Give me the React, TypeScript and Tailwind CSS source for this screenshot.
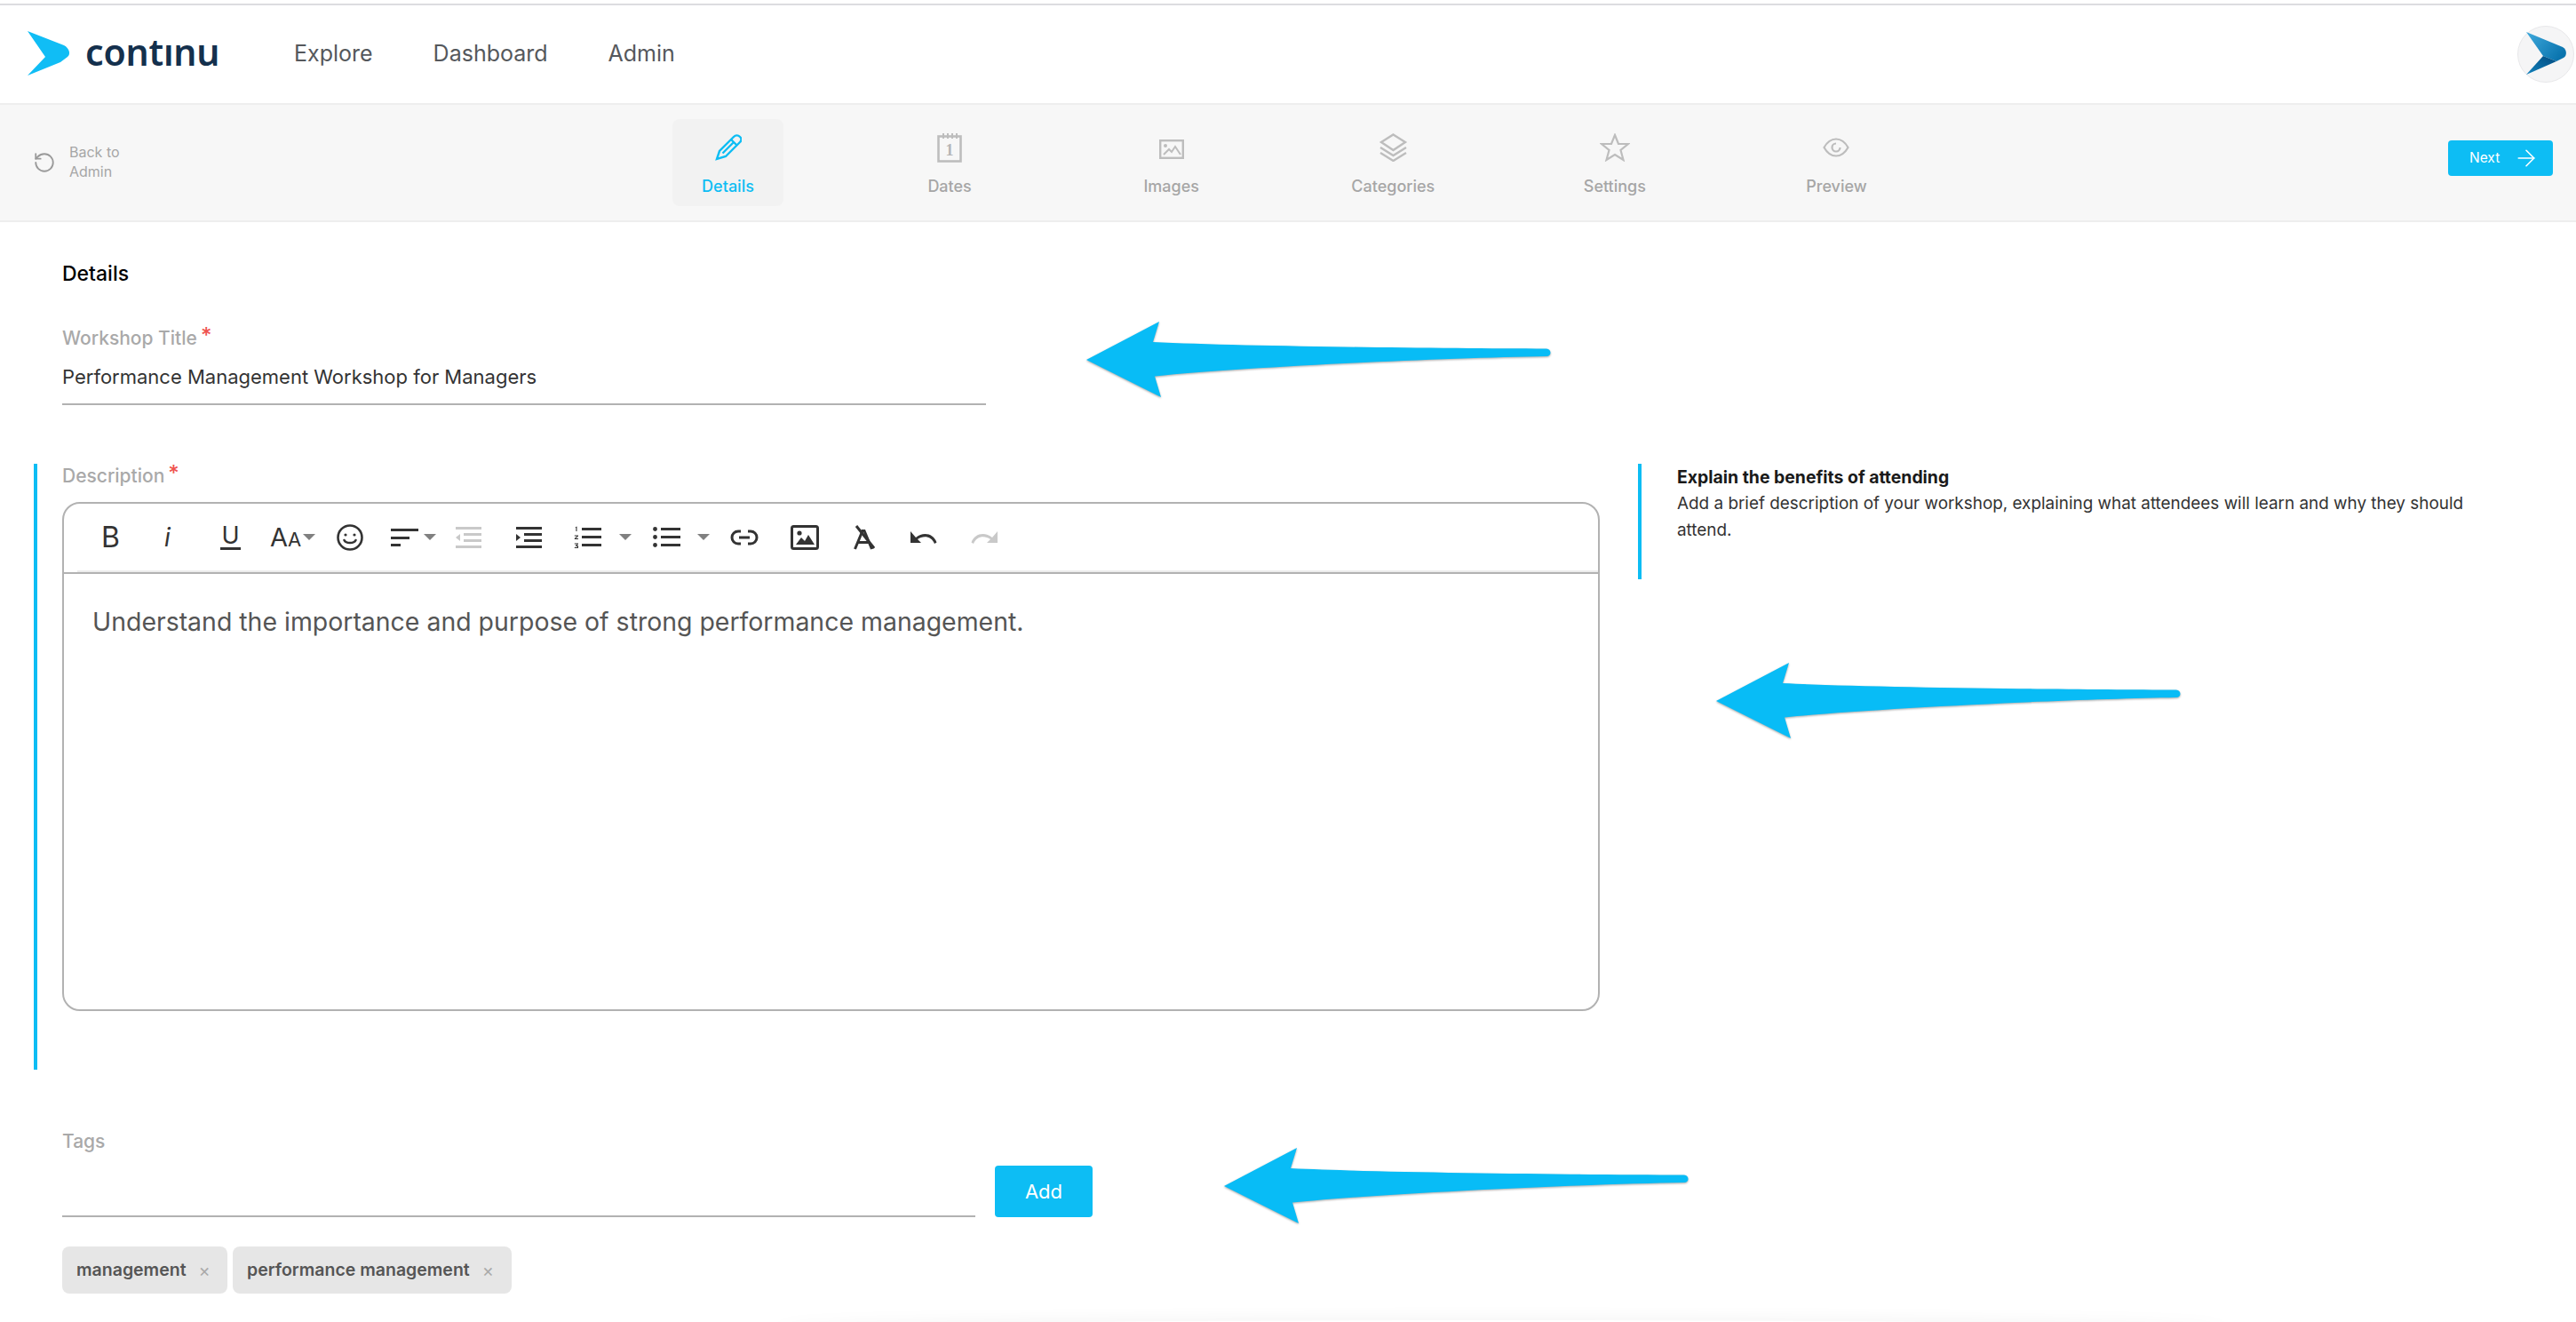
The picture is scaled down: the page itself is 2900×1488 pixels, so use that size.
import { ArrowRight, RotateCcw } from "lucide-react";

const BLUE = "#0dbdf4";
const GREY = "#bdbdbd";

function Logo() {
  return (
    <svg width="50" height="52" viewBox="0 0 50 52" className="shrink-0">
      <path d="M0 0L41 16C47 19 49 26 45 29L37 35L0 50L20 29Z" fill="#10bdf5" />
    </svg>
  );
}

function Avatar() {
  return (
    <div className="w-[64px] h-[64px] rounded-full bg-[#f5f5f6] border border-[#e8e8ea] shrink-0 mr-[2px] flex items-center justify-center">
      <svg width="48" height="50" viewBox="0 0 48 50" className="ml-[4px]">
        <defs>
          <linearGradient id="av1" x1="0" y1="0" x2="1" y2="0.6">
            <stop offset="0" stopColor="#3fa9dc" />
            <stop offset="1" stopColor="#0a74ae" />
          </linearGradient>
          <linearGradient id="av2" x1="0" y1="1" x2="1" y2="0">
            <stop offset="0" stopColor="#1383bd" />
            <stop offset="1" stopColor="#004a80" />
          </linearGradient>
        </defs>
        <path d="M0 0L41 17C46 20 46 27 42 29L34 33L19 27Z" fill="url(#av1)" />
        <path d="M19 27L34 33L0 48Z" fill="url(#av2)" />
      </svg>
    </div>
  );
}

const TABS = [
  {
    label: "Details",
    active: true,
    icon: (
      <svg width="30" height="30" viewBox="0 0 30 30" fill="none" stroke={BLUE} strokeWidth="2.4">
        <path d="M2 28L5 19L21 3C23 1 26 1 28 3C30 5 30 7 28 9L12 25Z" />
        <path d="M18 6L25 13M8.5 21.5L21 9" />
      </svg>
    ),
  },
  {
    label: "Dates",
    icon: (
      <svg width="28" height="33" viewBox="0 0 28 33" fill="none" stroke={GREY} strokeWidth="2.6">
        <rect x="1.5" y="3.5" width="25" height="28" />
        <path d="M7 0v6M12 0v6M17 0v6M22 0v6" strokeWidth="2" />
        <text x="14" y="25" textAnchor="middle" fontSize="18" fontWeight="700" fill="#b5b5b5" stroke="none" fontFamily="Liberation Serif">1</text>
      </svg>
    ),
  },
  {
    label: "Images",
    icon: (
      <svg width="28" height="22" viewBox="0 0 28 22" fill="none" stroke={GREY} strokeWidth="2" className="mt-[3px]">
        <rect x="1.2" y="1.2" width="25.6" height="19.6" strokeWidth="2.4" />
        <circle cx="7" cy="7" r="2" fill={GREY} stroke="none" />
        <path d="M5 17L11 11L14 14L18 8L24 17" />
      </svg>
    ),
  },
  {
    label: "Categories",
    icon: (
      <svg width="33" height="32" viewBox="0 0 33 32" fill="none" stroke={GREY} strokeWidth="2.4">
        <path d="M16.5 1.5L30 10L16.5 19L3 10Z" />
        <path d="M2 16L16.5 25L31 16M2 22L16.5 31L31 22" />
      </svg>
    ),
  },
  {
    label: "Settings",
    icon: (
      <svg width="34" height="32" viewBox="0 0 34 32" fill="none" stroke={GREY} strokeWidth="2.2">
        <path d="M17 2L21 12H32L23.5 19L26.5 30L17 24L7.5 30L10.5 19L2 12H13Z" />
      </svg>
    ),
  },
  {
    label: "Preview",
    icon: (
      <svg width="30" height="22" viewBox="0 0 30 22" fill="none" stroke={GREY} strokeWidth="2.2">
        <path d="M1.5 11C6 3 11 1.5 15 1.5S24 3 28.5 11C24 19 19 20.5 15 20.5S6 19 1.5 11Z" />
        <path d="M15 6.5a4.5 4.5 0 1 0 4.5 4.5" />
      </svg>
    ),
  },
];

function Caret({ className }: { className: string }) {
  return (
    <svg width="14" height="7" viewBox="0 0 14 7" className={className}>
      <path d="M0 0H14L7 7Z" fill="#808080" />
    </svg>
  );
}

function IndentIcon({ color, left, className }: { color: string; left?: boolean; className: string }) {
  return (
    <svg width="29" height="24" viewBox="0 0 29 24" className={className} fill={color}>
      <rect x="0" y="0" width="29" height="3" />
      <rect x="9" y="7" width="20" height="3" />
      <rect x="9" y="14" width="20" height="3" />
      <rect x="0" y="21" width="29" height="3" />
      <path d={left ? "M5 8V16L0 12Z" : "M0 8V16L5 12Z"} />
    </svg>
  );
}

function Toolbar() {
  return (
    <div className="border-b-2 border-[#b2b2b2]">
      <div className="h-[75px] flex items-center pl-[42px] text-[#333]">
        <span className="text-[32px] leading-none w-[21px]">B</span>
        <span className="ml-[50px] text-[28px] leading-none italic w-[11px]">i</span>
        <span className="ml-[52px] w-[23px] flex flex-col items-center">
          <span className="text-[27px] leading-[25px]">U</span>
          <span className="w-[23px] h-[3px] bg-[#333] mt-[1px]" />
        </span>
        <span className="ml-[33px] w-[33px] flex items-baseline leading-none">
          <span className="text-[29px]">A</span>
          <span className="text-[22px]">A</span>
        </span>
        <Caret className="ml-[4px]" />
        <svg width="30" height="30" viewBox="0 0 30 30" fill="none" stroke="#333" strokeWidth="2.6" className="ml-[24px]">
          <circle cx="15" cy="15" r="13.5" />
          <circle cx="10" cy="12" r="1.6" fill="#333" stroke="none" />
          <circle cx="20" cy="12" r="1.6" fill="#333" stroke="none" />
          <path d="M8.5 18c2 4 11 4 13 0" strokeLinecap="round" />
        </svg>
        <svg width="31" height="24" viewBox="0 0 31 24" fill="#333" className="ml-[31px]">
          <rect x="0" y="2" width="31" height="3" />
          <rect x="0" y="11" width="21" height="3" />
          <rect x="0" y="19" width="11" height="3" />
        </svg>
        <Caret className="ml-[6px]" />
        <IndentIcon color="#c9c9c9" left className="ml-[22px]" />
        <IndentIcon color="#333" className="ml-[39px]" />
        <svg width="31" height="26" viewBox="0 0 31 26" fill="#333" className="ml-[36px]">
          <rect x="9" y="2" width="22" height="3" />
          <rect x="9" y="11" width="22" height="3" />
          <rect x="9" y="20" width="22" height="3" />
          <path d="M1.5 1.5L3.5 0.5V6H2.4V2.2ZM0.8 10.5H5V11.5L2.3 14H5V15H0.8V14L3.6 11.5H0.8ZM0.8 19.5H5V20.5L3.2 22H5V25H0.8V24H3.9V23H2V22L3.5 20.5H0.8Z" />
        </svg>
        <Caret className="ml-[20px]" />
        <svg width="31" height="26" viewBox="0 0 31 26" fill="#333" className="ml-[24px]">
          <rect x="9" y="2" width="22" height="3" />
          <rect x="9" y="11" width="22" height="3" />
          <rect x="9" y="20" width="22" height="3" />
          <circle cx="2.5" cy="3.5" r="2.4" />
          <circle cx="2.5" cy="12.5" r="2.4" />
          <circle cx="2.5" cy="21.5" r="2.4" />
        </svg>
        <Caret className="ml-[19px]" />
        <svg width="32" height="18" viewBox="0 0 32 18" fill="none" stroke="#333" strokeWidth="3" className="ml-[23px]">
          <path d="M12 2H9a7 7 0 000 14h3M20 2h3a7 7 0 010 14h-3" />
          <path d="M10 9h12" />
        </svg>
        <svg width="32" height="28" viewBox="0 0 32 28" fill="none" className="ml-[36px]">
          <rect x="1.5" y="1.5" width="29" height="25" rx="2" stroke="#333" strokeWidth="3" />
          <circle cx="10" cy="9" r="2.6" fill="#333" />
          <path d="M6 22L12 14L16 18L20 11L27 22Z" fill="#333" />
        </svg>
        <svg width="24" height="28" viewBox="0 0 24 28" fill="none" stroke="#333" strokeWidth="3" className="ml-[39px]">
          <path d="M1.5 27L10 6.5h2L20.5 27M5 19.5h12" />
          <path d="M3 1l20 25" />
        </svg>
        <svg width="30" height="17" viewBox="0 0 30 17" fill="#333" className="ml-[40px]">
          <path d="M0 2V15H12L8 11C15 6 24 8 27 16L29.5 14.5C26 4 14 2 6 9L0 2Z" />
        </svg>
        <svg width="30" height="17" viewBox="0 0 30 17" fill="#c9c9c9" className="ml-[38px] -scale-x-100">
          <path d="M0 2V15H12L8 11C15 6 24 8 27 16L29.5 14.5C26 4 14 2 6 9L0 2Z" />
        </svg>
      </div>
      <div className="ml-[15px] h-[2px] bg-[#ececec]" />
    </div>
  );
}

function Arrow({ className }: { className: string }) {
  return (
    <svg width="530" height="92" viewBox="0 0 530 92" className={className}>
      <path
        d="M1 44L83 1L76 24C180 29 400 31 519 31.5C525 32 525 40 519 40C400 42 180 52 78 62.5L85 86Z"
        fill="#08bcf6"
        style={{ filter: "drop-shadow(0 1px 1px rgba(0,0,0,0.35))" }}
      />
    </svg>
  );
}

function Label({ text, required }: { text: string; required?: boolean }) {
  return (
    <div className="text-[21px] leading-[28px] font-medium text-[#a9a9a9] flex">
      {text}
      {required && <span className="text-[#ef5350] text-[24px] leading-[22px] ml-[4px]">*</span>}
    </div>
  );
}

export default function App() {
  return (
    <div className="relative w-[2900px] h-[1488px] bg-white overflow-hidden font-['Inter',sans-serif]">
      <div className="h-[6px] border-b-2 border-[#dcdce0]" />

      {/* Top nav */}
      <header className="h-[112px] border-b-2 border-[#eeeeee] flex items-center pl-[31px]">
        <Logo />
        <div className="ml-[15px] w-[150px] text-[41px] leading-none font-semibold text-[#14304d] font-['Noto_Sans',sans-serif] tracking-[-0.2px] mt-[-5px] whitespace-nowrap">
          contınu
        </div>
        <nav className="ml-[85px] flex gap-[68px] text-[25px] text-[#55585c]">
          <span>Explore</span>
          <span>Dashboard</span>
          <span>Admin</span>
        </nav>
        <div className="flex-1" />
        <Avatar />
      </header>

      {/* Wizard steps */}
      <div className="h-[132px] border-b-2 border-[#eeeeee] bg-[#f7f7f7] flex items-center relative">
        <div className="flex items-center pl-[37px] w-[757px] shrink-0">
          <RotateCcw size={26} strokeWidth={1.7} color="#9a9a9a" />
          <div className="ml-[15px] mt-[-2px] text-[16px] leading-[22px] text-[#a6a6a6]">
            Back to
            <br />
            Admin
          </div>
        </div>
        <div className="flex">
          {TABS.map((tab) => (
            <div
              key={tab.label}
              className={`w-[125px] h-[98px] mr-[124.6px] rounded-[8px] flex flex-col items-center ${tab.active ? "bg-[#f2f2f2]" : ""}`}
            >
              <div className="h-[64px] flex items-center justify-center">{tab.icon}</div>
              <div className={`text-[18px] leading-[24px] font-medium whitespace-nowrap ${tab.active ? "text-[#0dbdf4]" : "text-[#a6a6a6]"}`}>
                {tab.label}
              </div>
            </div>
          ))}
        </div>
        <button className="absolute left-[2756px] top-[40px] w-[118px] h-[40px] rounded-[4px] bg-[#0dbdf4] text-white text-[15.5px] flex items-center pl-[24px] gap-[15px]">
          Next
          <ArrowRight size={30} strokeWidth={1.3} />
        </button>
      </div>

      {/* Form */}
      <main className="pl-[38px] pt-[43px]">
        <div className="pl-[32px]">
          <h2 className="text-[23px] leading-[30px] font-medium text-black">Details</h2>
          <div className="mt-[44px]">
            <Label text="Workshop Title" required />
          </div>
          <div className="mt-[11px] w-[1040px] h-[50px] border-b-2 border-[#b2b2b2] text-[22px] leading-[36px] text-[#333]">
            Performance Management Workshop for Managers
          </div>
        </div>

        <div className="flex items-start mt-[66px]">
          <div className="w-[1763px] h-[682px] border-l-4 border-[#0dbdf4] pl-[28px] shrink-0">
            <Label text="Description" required />
            <div className="w-[1731px] h-[573px] mt-[15px] border-2 border-[#b2b2b2] rounded-[20px]">
              <Toolbar />
              <div className="pl-[32px] pt-[34px] text-[28.45px] leading-[40px] text-[#555]">
                Understand the importance and purpose of strong performance management.
              </div>
            </div>
          </div>
          <div className="ml-[43px] h-[130px] border-l-4 border-[#0dbdf4] pl-[40px] w-[970px]">
            <div className="text-[19.4px] leading-[30px] font-bold text-[#1a1a1a]">Explain the benefits of attending</div>
            <div className="text-[18.9px] leading-[30px] text-[#333]">
              Add a brief description of your workshop, explaining what attendees will learn and why they should attend.
            </div>
          </div>
        </div>

        <div className="pl-[32px] mt-[67px]">
          <Label text="Tags" />
          <div className="flex items-end mt-[13px]">
            <div className="w-[1028px] h-[58px] border-b-2 border-[#b2b2b2]" />
            <button className="ml-[22px] w-[110px] h-[58px] rounded-[4px] bg-[#0dbdf4] text-white text-[22px]">Add</button>
          </div>
          <div className="flex gap-[6px] mt-[33px]">
            <div className="h-[53px] w-[186px] rounded-[8px] bg-[#e6e6e6] flex items-center pl-[16px] text-[19.5px] font-semibold text-[#555]">
              management
              <span className="ml-[14px] text-[#aaa] font-normal text-[20px]">×</span>
            </div>
            <div className="h-[53px] w-[314px] rounded-[8px] bg-[#e6e6e6] flex items-center pl-[16px] text-[19.5px] font-semibold text-[#555]">
              performance management
              <span className="ml-[14px] text-[#aaa] font-normal text-[20px]">×</span>
            </div>
          </div>
        </div>
      </main>

      {/* Annotation arrows over the screenshot */}
      <Arrow className="absolute left-[1222px] top-[361px]" />
      <Arrow className="absolute left-[1931px] top-[745px]" />
      <Arrow className="absolute left-[1377px] top-[1291px]" />
      <div className="absolute left-[870px] top-[1486px] w-[1640px] h-[20px] rounded-[50%] shadow-[0_0_20px_rgba(0,0,0,0.06)]" />
    </div>
  );
}
